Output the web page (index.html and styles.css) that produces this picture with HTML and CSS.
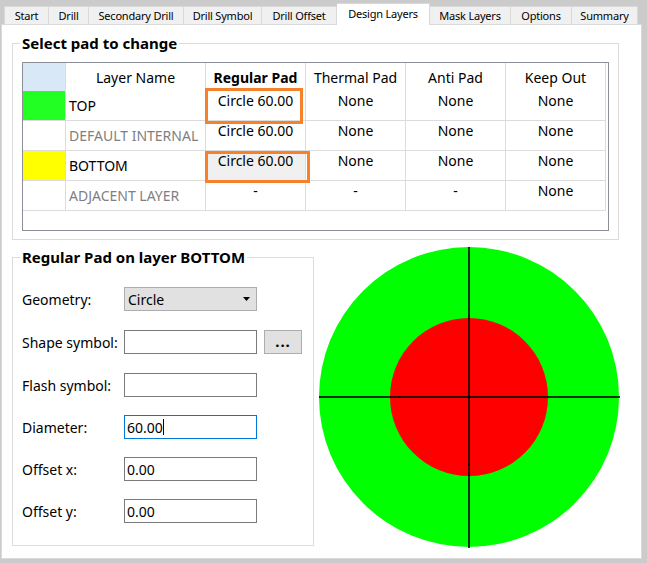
FILE: index.html
```html
<!DOCTYPE html>
<html>
<head>
<meta charset="utf-8">
<title>Padstack Editor - Design Layers</title>
<link rel="stylesheet" href="styles.css">
</head>
<body>
<div class="window">
  <div class="tabs">
    <div class="tab first">Start</div>
    <div class="tab">Drill</div>
    <div class="tab">Secondary Drill</div>
    <div class="tab">Drill Symbol</div>
    <div class="tab">Drill Offset</div>
    <div class="tab active">Design Layers</div>
    <div class="tab">Mask Layers</div>
    <div class="tab">Options</div>
    <div class="tab">Summary</div>
  </div>
  <div class="panel">
    <fieldset class="group group-pads">
      <legend>Select pad to change</legend>
      <div class="grid-frame">
        <div class="pad-grid">
          <div class="cell head corner"></div>
          <div class="cell head">Layer Name</div>
          <div class="cell head bold">Regular Pad</div>
          <div class="cell head">Thermal Pad</div>
          <div class="cell head">Anti Pad</div>
          <div class="cell head">Keep Out</div>

          <div class="cell swatch green"></div>
          <div class="cell name">TOP</div>
          <div class="cell val">Circle 60.00</div>
          <div class="cell val">None</div>
          <div class="cell val">None</div>
          <div class="cell val">None</div>

          <div class="cell swatch"></div>
          <div class="cell name muted">DEFAULT INTERNAL</div>
          <div class="cell val">Circle 60.00</div>
          <div class="cell val">None</div>
          <div class="cell val">None</div>
          <div class="cell val">None</div>

          <div class="cell swatch yellow"></div>
          <div class="cell name">BOTTOM</div>
          <div class="cell val selected">Circle 60.00</div>
          <div class="cell val">None</div>
          <div class="cell val">None</div>
          <div class="cell val">None</div>

          <div class="cell swatch"></div>
          <div class="cell name muted">ADJACENT LAYER</div>
          <div class="cell val">-</div>
          <div class="cell val">-</div>
          <div class="cell val">-</div>
          <div class="cell val">None</div>
        </div>
        <div class="hilite hl-top"></div>
        <div class="hilite hl-bottom"></div>
      </div>
    </fieldset>

    <div class="lower">
      <fieldset class="group group-edit">
        <legend>Regular Pad on layer BOTTOM</legend>
        <div class="form">
          <div class="form-row spaced">
            <span class="label">Geometry:</span>
            <div class="combo">
              <span>Circle</span>
              <svg class="arrow" width="7" height="4" viewBox="0 0 7 4"><path d="M0 0H7L3.5 4Z" fill="#000"/></svg>
            </div>
          </div>
          <div class="form-row spaced">
            <span class="label">Shape symbol:</span>
            <div class="field"></div>
            <div class="btn">...</div>
          </div>
          <div class="form-row">
            <span class="label">Flash symbol:</span>
            <div class="field"></div>
          </div>
          <div class="form-row">
            <span class="label">Diameter:</span>
            <div class="field focused">60.00<span class="caret"></span></div>
          </div>
          <div class="form-row">
            <span class="label">Offset x:</span>
            <div class="field">0.00</div>
          </div>
          <div class="form-row">
            <span class="label">Offset y:</span>
            <div class="field">0.00</div>
          </div>
        </div>
      </fieldset>
      <svg class="preview" width="301" height="301" viewBox="0 0 301 301">
        <circle cx="150" cy="150" r="150" fill="#00ff00"/>
        <circle cx="150" cy="150" r="79" fill="#ff0000"/>
        <line x1="150" y1="0" x2="150" y2="301" stroke="#000" stroke-opacity="0.8" stroke-width="2"/>
        <line x1="0" y1="150" x2="301" y2="150" stroke="#000" stroke-opacity="0.8" stroke-width="2"/>
      </svg>
    </div>
  </div>
</div>
</body>
</html>
```

FILE: styles.css
```css
* { box-sizing: border-box; }

body {
  margin: 0;
  width: 647px;
  height: 563px;
  overflow: hidden;
  background: #cbcbcb;
  font-family: "Noto Sans", "Segoe UI", "DejaVu Sans", sans-serif;
  color: #000;
}

.window {
  padding: 3px 0 0 1px;
}

/* ---------- tabs ---------- */
.tabs {
  display: grid;
  grid-template-columns: 45px 40px 95px 78px 75px 93px 81px 61px 66px;
  align-items: end;
  height: 21px;
  margin-left: 3px;
}

.tab {
  height: 18px;
  border: 1px solid #d9d9d9;
  border-left: none;
  border-bottom: none;
  background: #f0f0f0;
  font-size: 11px;
  line-height: 17px;
  text-align: center;
  white-space: nowrap;
  letter-spacing: -0.2px;
}

.tab.first { border-left: 1px solid #d9d9d9; }

.tab.active {
  position: relative;
  z-index: 1;
  height: 22px;
  margin-bottom: -1px;
  padding-top: 1px;
  background: #fff;
}

/* ---------- panel ---------- */
.panel {
  width: 641px;
  height: 535px;
  background: #fff;
  border: 1px solid #dadada;
  padding: 8px 0 0 10px;
}

.group {
  margin: 0;
  border: 1px solid #dcdcdc;
  min-width: 0;
}

.group legend {
  margin-left: -2px;
  padding: 0 2px;
  font-size: 15px;
  line-height: 20px;
  font-weight: bold;
}

.group-pads {
  width: 607px;
  padding: 9px 0 8px 9px;
}

/* ---------- pad table ---------- */
.grid-frame {
  position: relative;
  width: 587px;
  height: 169px;
  border: 1px solid #8b9096;
}

.pad-grid {
  display: grid;
  grid-template-columns: 43px 140px repeat(4, 100px);
  grid-template-rows: 28px repeat(4, 30px);
  font-size: 14px;
  line-height: 19px;
}

.cell {
  border-right: 1px solid #dcdcdc;
  text-align: center;
  white-space: nowrap;
  overflow: hidden;
}

.cell.head {
  padding-top: 5px;
}

.cell.corner { background: #d9e8f7; }
.cell.bold { font-weight: bold; }

.cell.swatch,
.cell.name,
.cell.val {
  border-bottom: 1px solid #dcdcdc;
}

.cell.swatch.green { background: #22ff22; }
.cell.swatch.yellow { background: #ffff00; }

.cell.name {
  text-align: left;
  padding: 5px 0 0 3px;
}

.cell.muted { color: #7f7f7f; }

.cell.val { padding-top: 0; }
.cell.selected { background: #f0f0f0; }

.hilite {
  position: absolute;
  border: 3px solid #f5822a;
}

.hl-top {
  left: 182px;
  top: 25px;
  width: 98px;
  height: 36px;
}

.hl-bottom {
  left: 182px;
  top: 88px;
  width: 105px;
  height: 32px;
}

/* ---------- lower area ---------- */
.lower {
  display: flex;
  align-items: flex-start;
  margin-top: 7px;
}

.group-edit {
  width: 302px;
  padding: 20px 0 22px 9px;
}

.form {
  display: flex;
  flex-direction: column;
  gap: 18px;
}

.form-row {
  display: flex;
  align-items: center;
  height: 24px;
  font-size: 14px;
}

.form-row.spaced { margin-bottom: 1px; }

.label {
  width: 102px;
  white-space: nowrap;
}

.combo {
  display: flex;
  align-items: center;
  justify-content: space-between;
  width: 133px;
  height: 24px;
  padding: 0 6px 0 3px;
  background: #e1e1e1;
  border: 1px solid #adadad;
}

.arrow { display: block; }

.field {
  display: flex;
  align-items: center;
  width: 133px;
  height: 24px;
  padding-left: 2px;
  border: 1px solid #7a7a7a;
  background: #fff;
}

.field.focused { border-color: #0078d7; }

.caret {
  display: inline-block;
  width: 1px;
  height: 16px;
  background: #000;
}

.btn {
  width: 38px;
  height: 24px;
  margin-left: 7px;
  padding-top: 1px;
  background: #e1e1e1;
  border: 1px solid #adadad;
  text-align: center;
  font-weight: bold;
  font-size: 15px;
  line-height: 18px;
  letter-spacing: 1px;
}

.preview {
  display: block;
  margin-left: 5px;
}
```
